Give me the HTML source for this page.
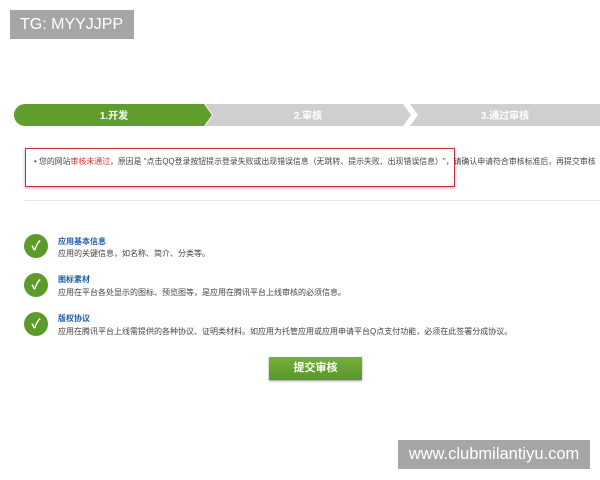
<!DOCTYPE html>
<html><head><meta charset="utf-8"><style>
body{margin:0;width:600px;height:480px;background:#fff;position:relative;overflow:hidden;font-family:"Liberation Sans","Noto Sans CJK SC",sans-serif}
.a{position:absolute}
.wm{background:#a6a6a6;color:#fff;font-size:16px;line-height:29px;padding:0 10px}
.t{font-size:8px;color:#444;white-space:nowrap}
.h{font-size:8px;color:#1d5ea8;font-weight:bold}
.c{width:24px;height:24px;border-radius:50%;background:#5c9a2a;color:#fff;font-size:13px;text-align:center;line-height:24px;font-weight:bold}
</style></head><body>
<div class="a wm" style="left:10px;top:10px;width:104px">TG: MYYJJPP</div>
<svg class="a" style="left:0;top:104px" width="600" height="22">
<polygon points="410,0 600,0 600,22 410,22 418,11" fill="#cfcfcf"/>
<polygon points="205,0 403,0 411,11 403,22 205,22 213,11" fill="#cfcfcf"/>
<path d="M25,0 H204 L212,11 L204,22 H25 A11,11 0 0 1 25,0Z" fill="#5f9e2c"/>
<text x="114" y="15" fill="#fff" font-size="10" font-weight="bold" text-anchor="middle" font-family="Liberation Sans,Noto Sans CJK SC,sans-serif">1.开发</text>
<text x="308" y="15" fill="#fff" font-size="10" font-weight="bold" text-anchor="middle" font-family="Liberation Sans,Noto Sans CJK SC,sans-serif">2.审核</text>
<text x="505" y="15" fill="#fff" font-size="10" font-weight="bold" text-anchor="middle" font-family="Liberation Sans,Noto Sans CJK SC,sans-serif">3.通过审核</text>
</svg>
<div class="a" style="left:25px;top:148px;width:428px;height:37px;border:1px solid #c03040;box-shadow:0 1px 3px #caa"></div>
<div class="a t" style="left:34px;top:156px;font-size:7.9px">• 您的网站<span style="color:#e03030">审核未通过</span>，原因是 "点击QQ登录按钮提示登录失败或出现错误信息（无跳转、提示失败、出现错误信息）"，请确认申请符合审核标准后，再提交审核</div>
<div class="a" style="left:25px;top:200px;width:575px;height:1px;background:#e4e4e4"></div>
<div class="a c" style="left:24px;top:234px">✓</div>
<div class="a h" style="left:58px;top:236px">应用基本信息</div>
<div class="a t" style="left:58px;top:248px">应用的关键信息，如名称、简介、分类等。</div>
<div class="a c" style="left:24px;top:273px">✓</div>
<div class="a h" style="left:58px;top:274px">图标素材</div>
<div class="a t" style="left:58px;top:287px">应用在平台各处显示的图标、预览图等，是应用在腾讯平台上线审核的必须信息。</div>
<div class="a c" style="left:24px;top:312px">✓</div>
<div class="a h" style="left:58px;top:313px">版权协议</div>
<div class="a t" style="left:58px;top:326px">应用在腾讯平台上线需提供的各种协议、证明类材料。如应用为托管应用或应用申请平台Q点支付功能，必须在此签署分成协议。</div>
<div class="a" style="left:269px;top:357px;width:93px;height:23px;background:linear-gradient(#74b03a,#5a962a);color:#fff;font-size:11px;font-weight:bold;text-align:center;line-height:23px;box-shadow:0 1px 2px #999">提交审核</div>
<div class="a wm" style="left:398px;top:440px;width:172px;font-size:16.5px;text-align:center">www.clubmilantiyu.com</div>
</body></html>
